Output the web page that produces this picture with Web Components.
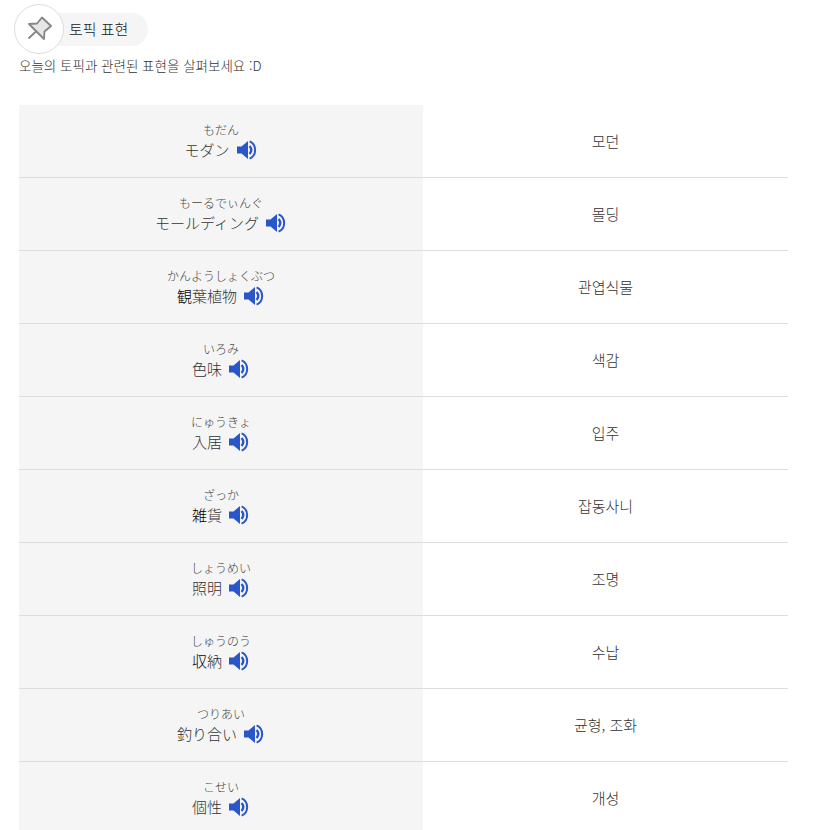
<!DOCTYPE html>
<html lang="ko"><head><meta charset="utf-8"><title>토픽 표현</title>
<style>
html,body{margin:0;padding:0;background:#fff;height:830px;overflow:hidden}
body{font-family:"Noto Sans CJK KR","Noto Sans",sans-serif;color:#333;font-weight:300}
</style></head><body>
<topic-page>
<topic-badge slot="badge">토픽 표현</topic-badge>
<span slot="intro">오늘의 토픽과 관련된 표현을 살펴보세요 :D</span>
<vocab-row ruby="もだん" word="モダン" meaning="모던"></vocab-row>
<vocab-row ruby="もーるでぃんぐ" word="モールディング" meaning="몰딩"></vocab-row>
<vocab-row ruby="かんようしょくぶつ" strong="観" word="葉植物" meaning="관엽식물"></vocab-row>
<vocab-row ruby="いろみ" word="色味" meaning="색감"></vocab-row>
<vocab-row ruby="にゅうきょ" word="入居" meaning="입주"></vocab-row>
<vocab-row ruby="ざっか" strong="雑" word="貨" meaning="잡동사니"></vocab-row>
<vocab-row ruby="しょうめい" word="照明" meaning="조명"></vocab-row>
<vocab-row ruby="しゅうのう" strong="収" word="納" meaning="수납"></vocab-row>
<vocab-row ruby="つりあい" word="釣り合い" meaning="균형, 조화"></vocab-row>
<vocab-row ruby="こせい" word="個性" meaning="개성"></vocab-row>
</topic-page>
<script>
class TopicPage extends HTMLElement{constructor(){super();this.attachShadow({mode:'open'}).innerHTML=`<style>
:host{display:block;padding:4px 35px 0 19px}
.intro{font-size:13.5px;line-height:20px;margin-top:1px;color:#333;height:50px}
</style><slot name="badge"></slot><div class="intro"><slot name="intro"></slot></div><div class="rows"><slot></slot></div>`}}
class TopicBadge extends HTMLElement{constructor(){super();this.attachShadow({mode:'open'}).innerHTML=`<style>
:host{display:flex;align-items:center;height:50px;margin-left:-5px;width:max-content}
.pin{width:48px;height:48px;border:1px solid #ddd;border-radius:50%;background:#fff;display:flex;align-items:center;justify-content:center;position:relative;z-index:1;flex:none}
.label{background:#f5f5f5;height:33px;box-sizing:border-box;display:flex;align-items:center;margin-left:-15px;padding:0 20px 2px;border-radius:0 17px 17px 0;font-size:15px;color:#222}
</style><div class="pin"><svg width="26" height="26" viewBox="0 0 26 26"><path d="M3 8 11 7.5 16 1.5 25 10 18.5 15.5 18 23Z" fill="#e6e6e6" stroke="#858585" stroke-width="1.8" stroke-linejoin="round"/><path d="M10 15.5 3 22" stroke="#858585" stroke-width="1.8" stroke-linecap="round" fill="none"/></svg></div><div class="label"><slot></slot></div>`}}
class SoundIcon extends HTMLElement{constructor(){super();this.attachShadow({mode:'open'}).innerHTML=`<style>:host{display:block;width:20px;height:20px;flex:none}svg{display:block}</style><svg width="20" height="20" viewBox="0 0 20 20"><path d="M0 6.5H4.5L11 1V19L4.5 13.5H0Z" fill="#2b56c9"/><path d="M12.6 6C14.6 8.4 14.6 11.6 12.6 14" fill="none" stroke="#2b56c9" stroke-width="2.4"/><path d="M12.6 1.4C20 4.6 20 15.4 12.6 18.6" fill="none" stroke="#2b56c9" stroke-width="2"/></svg>`}}
class VocabRow extends HTMLElement{constructor(){super();this.attachShadow({mode:'open'}).innerHTML=`<style>
:host{display:grid;grid-template-columns:404px 365px;height:73px;box-sizing:border-box;border-bottom:1px solid #ddd}
.l{background:#f5f5f5;display:flex;flex-direction:column;align-items:center;padding-top:16px;box-sizing:border-box;height:72px}
.ruby{font-size:12px;line-height:18px;color:#444}
.w{display:flex;align-items:center;gap:7px;height:20px;margin-top:1px;font-size:15px;color:#333;margin-left:-1px}
.word{padding-bottom:2px}
.strong{color:#000}
.r{display:flex;align-items:center;justify-content:center;font-size:15px;color:#333;height:72px;box-sizing:border-box;padding-bottom:2px}
</style><div class="l"><div class="ruby"></div><div class="w"><span class="word"><span class="strong"></span><span class="rest"></span></span><sound-icon></sound-icon></div></div><div class="r"></div>`}
connectedCallback(){const s=this.shadowRoot;s.querySelector('.ruby').textContent=this.getAttribute('ruby');s.querySelector('.strong').textContent=this.getAttribute('strong')||'';s.querySelector('.rest').textContent=this.getAttribute('word');s.querySelector('.r').textContent=this.getAttribute('meaning')}}
customElements.define('sound-icon',SoundIcon);
customElements.define('topic-page',TopicPage);
customElements.define('topic-badge',TopicBadge);
customElements.define('vocab-row',VocabRow);
</script>
</body></html>
